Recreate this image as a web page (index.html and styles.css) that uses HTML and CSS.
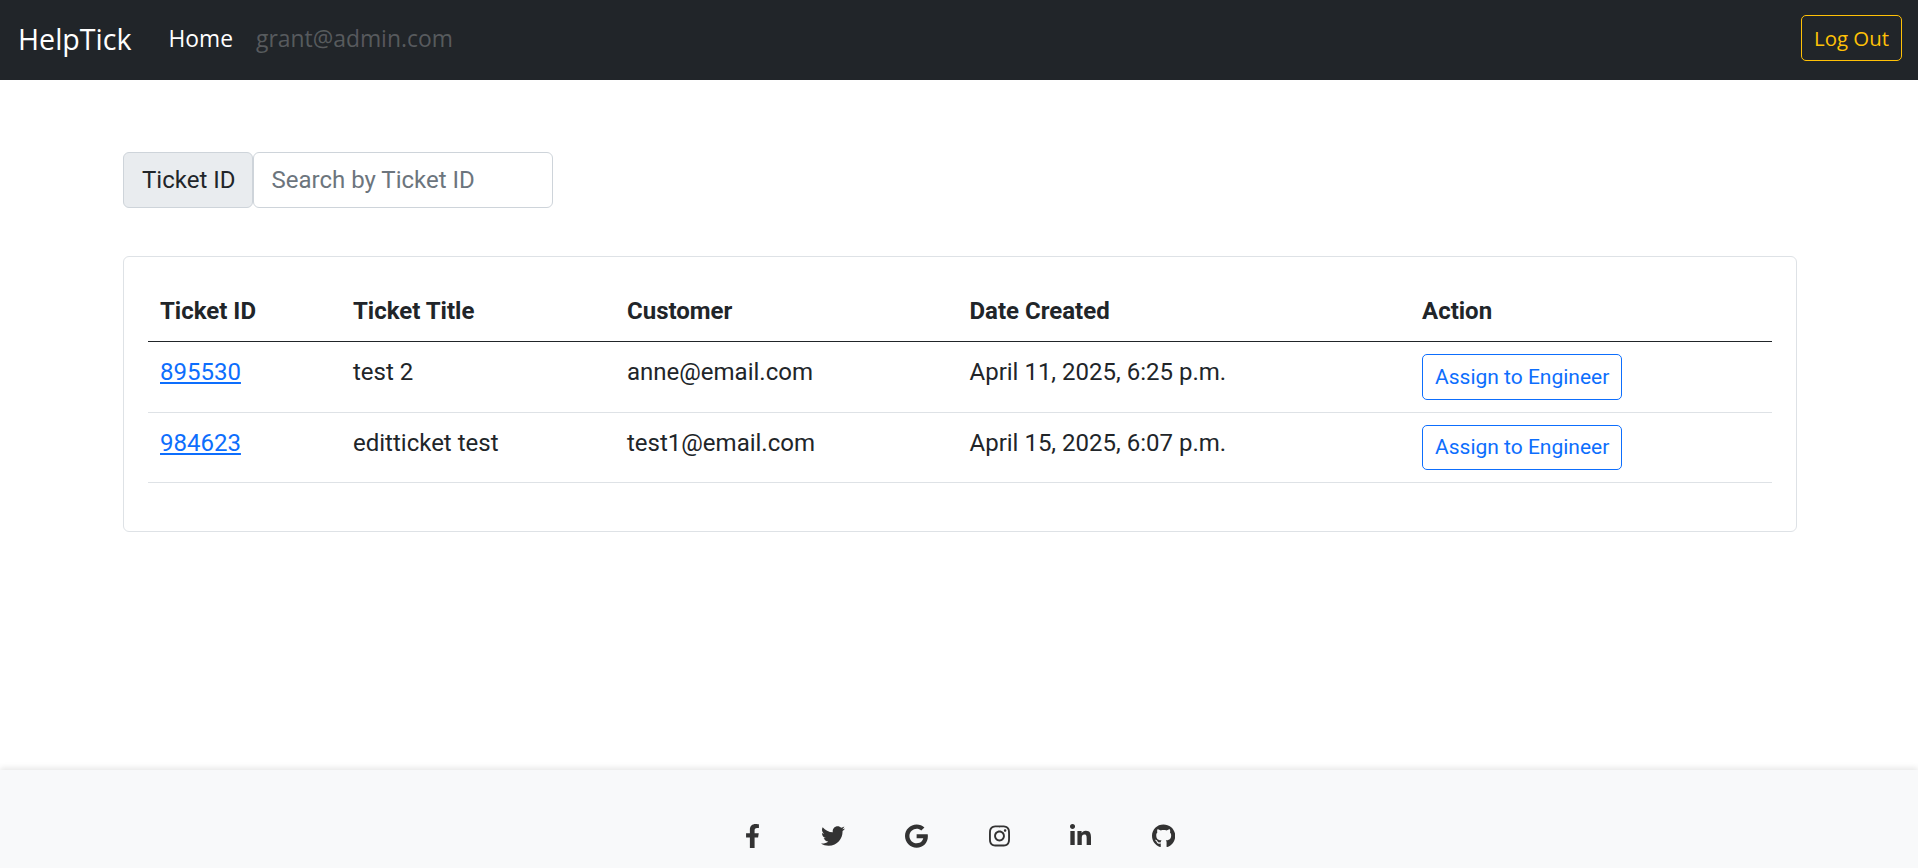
FILE: index.html
```html
<!DOCTYPE html>
<html lang="en">
<head>
    <meta charset="UTF-8">
    <meta name="viewport" content="width=device-width, initial-scale=1.0">
    <title>HelpTick</title>
    <link rel="stylesheet" href="styles.css">
</head>
<body>
    <nav class="navbar">
        <a class="brand" href="#">HelpTick</a>
        <a class="nav-link" href="#">Home</a>
        <span class="nav-user">grant@admin.com</span>
        <button class="btn-logout">Log Out</button>
    </nav>

    <main class="content">
        <div class="search-group">
            <span class="search-label">Ticket ID</span>
            <input class="search-input" type="text" placeholder="Search by Ticket ID">
        </div>

        <div class="card">
            <table class="tickets">
                <thead>
                    <tr>
                        <th class="col-id">Ticket ID</th>
                        <th class="col-title">Ticket Title</th>
                        <th class="col-customer">Customer</th>
                        <th class="col-date">Date Created</th>
                        <th>Action</th>
                    </tr>
                </thead>
                <tbody>
                    <tr>
                        <td><a href="#">895530</a></td>
                        <td>test 2</td>
                        <td>anne@email.com</td>
                        <td>April 11, 2025, 6:25 p.m.</td>
                        <td><button class="btn-assign">Assign to Engineer</button></td>
                    </tr>
                    <tr>
                        <td><a href="#">984623</a></td>
                        <td>editticket test</td>
                        <td>test1@email.com</td>
                        <td>April 15, 2025, 6:07 p.m.</td>
                        <td><button class="btn-assign">Assign to Engineer</button></td>
                    </tr>
                </tbody>
            </table>
        </div>
    </main>

    <footer class="footer">
        <a href="#" aria-label="Facebook"><svg class="icon" viewBox="0 0 320 512"><path d="M279.14 288l14.22-92.66h-88.91v-60.13c0-25.35 12.42-50.06 52.24-50.06h40.42V6.26S260.43 0 225.36 0c-73.22 0-121.08 44.38-121.08 124.72v70.62H22.89V288h81.39v224h100.17V288z"/></svg></a>
        <a href="#" aria-label="Twitter"><svg class="icon" viewBox="0 0 512 512"><path d="M459.37 151.716c.325 4.548.325 9.097.325 13.645 0 138.72-105.583 298.558-298.558 298.558-59.452 0-114.68-17.219-161.137-47.106 8.447.974 16.568 1.299 25.34 1.299 49.055 0 94.213-16.568 130.274-44.832-46.132-.975-84.792-31.188-98.112-72.772 6.498.974 12.995 1.624 19.818 1.624 9.421 0 18.843-1.3 27.614-3.573-48.081-9.747-84.143-51.98-84.143-102.985v-1.299c13.969 7.797 30.214 12.67 47.431 13.319-28.264-18.843-46.781-51.005-46.781-87.391 0-19.492 5.197-37.36 14.294-52.954 51.655 63.675 129.3 105.258 216.365 109.807-1.624-7.797-2.599-15.918-2.599-24.04 0-57.828 46.782-104.934 104.934-104.934 30.213 0 57.502 12.67 76.67 33.137 23.715-4.548 46.456-13.32 66.599-25.34-7.798 24.366-24.366 44.833-46.132 57.827 21.117-2.273 41.584-8.122 60.426-16.243-14.292 20.791-32.161 39.308-52.628 54.253z"/></svg></a>
        <a href="#" aria-label="Google"><svg class="icon" viewBox="0 0 488 512"><path d="M488 261.8C488 403.3 391.1 504 248 504 110.8 504 0 393.2 0 256S110.8 8 248 8c66.8 0 123 24.5 166.3 64.9l-67.5 64.9C258.5 52.6 94.3 116.6 94.3 256c0 86.5 69.1 156.6 153.7 156.6 98.2 0 135-70.4 140.8-106.9H248v-85.3h236.1c2.3 12.7 3.9 24.9 3.9 41.4z"/></svg></a>
        <a href="#" aria-label="Instagram"><svg class="icon" viewBox="0 0 448 512"><path d="M224.1 141c-63.6 0-114.9 51.3-114.9 114.9s51.3 114.9 114.9 114.9S339 319.5 339 255.9 287.7 141 224.1 141zm0 189.6c-41.1 0-74.7-33.5-74.7-74.7s33.5-74.7 74.7-74.7 74.7 33.5 74.7 74.7-33.6 74.7-74.7 74.7zm146.4-194.3c0 14.9-12 26.8-26.8 26.8-14.9 0-26.8-12-26.8-26.8s12-26.8 26.8-26.8 26.8 12 26.8 26.8zm76.1 27.2c-1.7-35.9-9.9-67.7-36.2-93.9-26.2-26.2-58-34.4-93.9-36.2-37-2.1-147.9-2.1-184.9 0-35.8 1.7-67.6 9.9-93.9 36.1s-34.4 58-36.2 93.9c-2.1 37-2.1 147.9 0 184.9 1.7 35.9 9.9 67.7 36.2 93.9s58 34.4 93.9 36.2c37 2.1 147.9 2.1 184.9 0 35.9-1.7 67.7-9.9 93.9-36.2 26.2-26.2 34.4-58 36.2-93.9 2.1-37 2.1-147.8 0-184.8zM398.8 388c-7.8 19.6-22.9 34.7-42.6 42.6-29.5 11.7-99.5 9-132.1 9s-102.7 2.6-132.1-9c-19.6-7.8-34.7-22.9-42.6-42.6-11.7-29.5-9-99.5-9-132.1s-2.6-102.7 9-132.1c7.8-19.6 22.9-34.7 42.6-42.6 29.5-11.7 99.5-9 132.1-9s102.7-2.6 132.1 9c19.6 7.8 34.7 22.9 42.6 42.6 11.7 29.5 9 99.5 9 132.1s2.7 102.7-9 132.1z"/></svg></a>
        <a href="#" aria-label="LinkedIn"><svg class="icon" viewBox="0 0 448 512"><path d="M100.28 448H7.4V148.9h92.88zM53.79 108.1C24.09 108.1 0 83.5 0 53.8a53.79 53.79 0 0 1 107.58 0c0 29.7-24.1 54.3-53.79 54.3zM447.9 448h-92.68V302.4c0-34.7-.7-79.2-48.29-79.2-48.29 0-55.69 37.7-55.69 76.7V448h-92.78V148.9h89.08v40.8h1.3c12.4-23.5 42.69-48.3 87.88-48.3 94 0 111.28 61.9 111.28 142.3V448z"/></svg></a>
        <a href="#" aria-label="GitHub"><svg class="icon" viewBox="0 0 496 512"><path d="M165.9 397.4c0 2-2.3 3.6-5.2 3.6-3.3 0-5.6-1.6-5.6-3.6 0-2 2.3-3.6 5.2-3.6 3-.3 5.6 1.3 5.6 3.6zm-31.1-4.5c-.7 2 1.3 4.3 4.3 4.9 2.6 1 5.6 0 6.2-2s-1.3-4.3-4.3-5.2c-2.6-.7-5.5.3-6.2 2.3zm44.2-1.7c-2.9.7-4.9 2.6-4.6 4.9.3 2 2.9 3.3 5.9 2.6 2.9-.7 4.9-2.6 4.6-4.6-.3-1.9-3-3.2-5.9-2.9zM244.8 8C106.1 8 0 113.3 0 252c0 110.9 69.8 205.8 169.5 239.2 12.8 2.3 17.3-5.6 17.3-12.1 0-6.2-.3-40.4-.3-61.4 0 0-70 15-84.7-29.8 0 0-11.4-29.1-27.8-36.6 0 0-22.9-15.7 1.6-15.4 0 0 24.9 2 38.6 25.8 21.9 38.6 58.6 27.5 72.9 20.9 2.3-16 8.8-27.1 16-33.7-55.9-6.2-112.3-14.3-112.3-110.5 0-27.5 7.6-41.3 23.6-58.9-2.6-6.5-11.1-33.3 2.6-67.9 20.9-6.5 69 27 69 27 20-5.6 41.5-8.5 62.8-8.5s42.8 2.9 62.8 8.5c0 0 48.1-33.6 69-27 13.7 34.7 5.2 61.4 2.6 67.9 16 17.7 25.8 31.5 25.8 58.9 0 96.5-58.9 104.2-114.8 110.5 9.2 7.9 17 22.9 17 46.4 0 33.7-.3 75.4-.3 83.6 0 6.5 4.6 14.4 17.3 12.1C428.2 457.8 496 362.9 496 252 496 113.3 383.5 8 244.8 8z"/></svg></a>
    </footer>
</body>
</html>
```

FILE: styles.css
```css
body {
    margin: 0;
    height: 100vh;
    display: flex;
    flex-direction: column;
    overflow: hidden;
    font-family: Roboto, sans-serif;
    font-size: 24px;
    line-height: 36px;
    color: #212529;
    background: #fff;
}

.navbar {
    height: 80px;
    flex: none;
    box-sizing: border-box;
    display: flex;
    align-items: center;
    padding: 0 16px 2px 18px;
    background: #212529;
    font-family: "Open Sans", sans-serif;
}
.brand {
    font-size: 28.6px;
    color: #fff;
    text-decoration: none;
    margin-right: 37px;
}
.nav-link {
    font-size: 22.8px;
    color: #fff;
    text-decoration: none;
    margin-right: 23px;
}
.nav-user {
    font-size: 22.9px;
    color: rgba(255, 255, 255, 0.25);
}
.btn-logout {
    margin-left: auto;
    margin-bottom: 2px;
    height: 46px;
    padding: 0 12px;
    font-family: inherit;
    font-size: 20.4px;
    color: #ffc107;
    background: transparent;
    border: 1px solid #ffc107;
    border-radius: 5px;
}

.content {
    flex: 1;
    margin: 0 121px 0 123px;
    padding-top: 72px;
}

.search-group {
    display: flex;
    width: 430px;
    height: 56px;
    margin-bottom: 48px;
}
.search-label {
    padding: 9px 17px 9px 18px;
    background: #e9ecef;
    border: 1px solid #ced4da;
    border-radius: 6px;
}
.search-input {
    flex: 1;
    min-width: 0;
    padding: 9px 18px 9px 17px;
    font-family: inherit;
    font-size: 24px;
    color: #212529;
    border: 1px solid #ced4da;
    border-radius: 6px;
    outline: none;
}
.search-input::placeholder {
    color: #6c757d;
    opacity: 1;
}

.card {
    padding: 24px 24px 48px;
    border: 1px solid #dee2e6;
    border-radius: 6px;
}

.tickets {
    width: 100%;
    table-layout: fixed;
    border-collapse: separate;
    border-spacing: 0;
}
.tickets th, .tickets td {
    box-sizing: border-box;
    padding: 12px;
    text-align: left;
    vertical-align: top;
    border-bottom: 1px solid #dee2e6;
}
.tickets th {
    font-weight: 700;
    border-bottom-color: #212529;
}
.tickets a {
    color: #0d6efd;
}
.col-id { width: 193px; }
.col-title { width: 274px; }
.col-customer { width: 342.5px; }
.col-date { width: 452.5px; }

.btn-assign {
    display: block;
    height: 45.5px;
    padding: 0 12px;
    font-family: Roboto, sans-serif;
    font-size: 21px;
    color: #0d6efd;
    background: #fff;
    border: 1px solid #0d6efd;
    border-radius: 5px;
}

.footer {
    height: 98px;
    flex: none;
    box-sizing: border-box;
    display: flex;
    justify-content: center;
    gap: 60.5px;
    padding: 54px 0 0 2.5px;
    background: #f8f9fa;
    box-shadow: 0 -2px 6px rgba(0, 0, 0, 0.1);
}
.footer a {
    display: block;
    height: 24px;
    line-height: 0;
}
.icon {
    height: 24px;
    width: auto;
    fill: #333;
}
```
